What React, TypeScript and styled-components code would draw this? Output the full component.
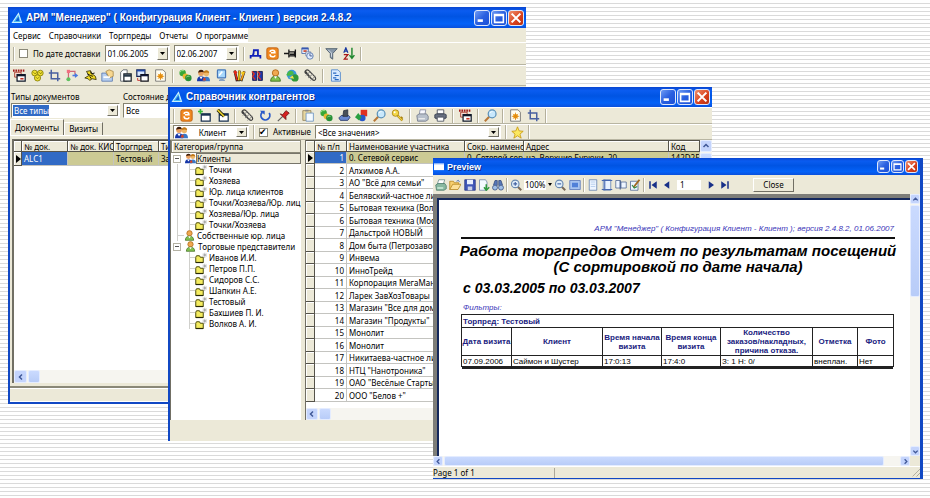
import React from "react";
import styled, { createGlobalStyle, css } from "styled-components";

const ui = '"Noto Sans", "Liberation Sans", sans-serif';
const arial = '"Liberation Sans", Arial, sans-serif';
const face = "#ece9d8";

const Global = createGlobalStyle`
  * { box-sizing: border-box; }
  body { margin: 0; font: 8px/10px ${ui}; color: #000; }
  button, input, select { font: inherit; color: inherit; margin: 0; padding: 0; border: 0; border-radius: 0; background: none; }
  svg { display: block; }
`;

const Desktop = styled.main`
  position: relative;
  height: 100vh;
  overflow: hidden;
  background: repeating-linear-gradient(#fff 0 3px, #dadada 3px 4px);
`;

const Win = styled.section`
  position: absolute;
  display: flex;
  flex-direction: column;
  overflow: hidden;
  background: ${face};
`;
const ManagerWindow = styled(Win)`
  top: 7px; left: 8px; right: 404px; bottom: 94px;
  border: solid #1148c4;
  border-width: 0 0 2px 2px;
`;
const DirectoryWindow = styled(Win)`
  top: 87px; left: 168px; right: 218px; bottom: 57px;
  border-left: 2px solid #1148c4;
`;
const PreviewWindow = styled(Win)`
  top: 158px; left: 433px; right: 7px; bottom: 19px;
  border: solid #1148c4;
  border-width: 0 3px 1px 0;
`;

const TitleBar = styled.header<{ $h: number }>`
  flex: none;
  display: flex;
  align-items: center;
  gap: 3px;
  height: ${p => p.$h}px;
  padding: 0 2px 0 1px;
  background: linear-gradient(#0a46d0, #0a5cf0 18%, #0054e3 45%, #0462f8 80%, #0a50dc);
  color: #fff;
`;
const Title = styled.h1<{ $size: number }>`
  flex: 1;
  margin: 0;
  font: bold ${p => p.$size}px/14px ${arial};
  white-space: nowrap;
  text-shadow: 1px 1px #0a2a88;
`;
const WinButtons = styled.div`display: flex; gap: 1px;`;
const WinButton = styled.button<{ $close?: boolean; $s: number }>`
  width: ${p => p.$s}px;
  height: ${p => p.$s}px;
  border: 1px solid #dfe8fb;
  border-radius: 3px;
  background: ${p => (p.$close ? "linear-gradient(135deg,#f0906c,#d8401c 60%,#b83010)" : "linear-gradient(135deg,#6f9cf4,#2a60e0 50%,#1a50d8)")};
  svg { width: 100%; height: 100%; }
`;

const MenuBar = styled.nav`
  flex: none;
  display: flex;
  gap: 8px;
  align-self: flex-start;
  height: 14px;
  padding: 2px 0 0 3px;
  background: #fff;
  font-size: 8px;
  white-space: nowrap;
`;
const MenuItem = styled.button``;

const Toolbar = styled.div<{ $h: number; $tight?: boolean }>`
  flex: none;
  display: flex;
  align-items: center;
  gap: ${p => (p.$tight ? 4 : 5)}px;
  height: ${p => p.$h}px;
  padding: 0 3px;
  border-top: 1px solid #fff;
  border-bottom: 1px solid #b8b5a2;
`;
const Group = styled.div<{ $w?: number }>`
  flex: none;
  display: flex;
  justify-content: space-between;
  width: ${p => (p.$w ? p.$w + "px" : "auto")};
`;
const Sep = styled.span`
  flex: none;
  width: 2px;
  height: 14px;
  border-left: 1px solid #b4b09c;
  border-right: 1px solid #fff;
`;
const IconButton = styled.button<{ $s: number }>`
  width: ${p => p.$s}px;
  height: ${p => p.$s}px;
  svg { width: 100%; height: 100%; }
`;

const CheckLabel = styled.label`
  display: flex;
  align-items: center;
  gap: 5px;
  white-space: nowrap;
`;
const Check = styled.input`
  appearance: none;
  width: 9px;
  height: 9px;
  border: 1px solid #8a8878;
  background: #fff;
  &:checked::after { content: "✔"; display: block; font: bold 9px/7px "DejaVu Sans", sans-serif; margin-left: -1px; }
`;

const ComboBox = styled.span<{ $w: number; $h: number }>`
  flex: none;
  display: flex;
  align-items: center;
  justify-content: space-between;
  width: ${p => p.$w}px;
  height: ${p => p.$h}px;
  padding: 1px;
  border: 1px solid;
  border-color: #85826f #fff #fff #85826f;
  background: #fff;
`;
const ComboSelect = styled.select<{ $marked?: boolean; $center?: boolean }>`
  appearance: none;
  flex: ${p => (p.$marked ? "0 0 36px" : "1")};
  min-width: 0;
  padding-left: 1px;
  line-height: 11px;
  outline: 0;
  ${p => p.$marked && css`background: #316ac5; color: #fff;`}
  ${p => p.$center && css`text-align: center;`}
`;
const ComboArrow = styled.span`
  flex: none;
  display: grid;
  place-items: center;
  width: 11px;
  height: 100%;
  border: 1px solid;
  border-color: #fff #716f64 #716f64 #fff;
  background: ${face};
`;
function Combo(p: { label: string; value: string; w: number; h: number; marked?: boolean; center?: boolean; icon?: string }) {
  return (
    <ComboBox $w={p.w} $h={p.h}>
      {p.icon && <Glyph name={p.icon} size={13} />}
      <ComboSelect aria-label={p.label} $marked={p.marked} $center={p.center}><option>{p.value}</option></ComboSelect>
      <ComboArrow><svg width="5" height="3" viewBox="0 0 5 3"><path d="M0 0h5L2.500 3z" /></svg></ComboArrow>
    </ComboBox>
  );
}

/* ---------- icons, drawn on a 16 × 16 grid ---------- */
const people = <><circle cx="5" cy="5" r="3.600" fill="#e8a060" /><path d="M1.500 4.500Q2 1 5 1t3.600 3Q5 3 1.500 4.500z" fill="#3a1a08" /><path d="M0 15q0-6 5-6t5 6z" fill="#1838a8" /><circle cx="11.500" cy="5.500" r="3.300" fill="#f0b868" /><path d="M8 5q.5-3.500 3.500-3.500T15 5q-3-1.500-7 0z" fill="#c07818" /><path d="M7 15q0-5.500 4.500-5.500T16 15z" fill="#3878c8" /><path d="M3 9.500l2 3 2-3z" fill="#fff" /><path d="M7 14q0-3 3-4l1 4z" fill="#d84020" /></>;
const person = (body: string) => <><circle cx="8" cy="4.800" r="3.900" fill="#f0a850" stroke="#a86010" /><path d="M2 15q0-6 6-6t6 6z" fill={body} stroke="#386818" /><path d="M6 9l2 3 2-3z" fill="#fff" /></>;
const lens = <><path d="M7 9l-6 6" stroke="#b87838" strokeWidth="2.500" /><circle cx="10" cy="6" r="4.800" fill="#c8e8fc" stroke="#5a90b8" strokeWidth="1.500" /><path d="M7.500 5q1-2 3-2" stroke="#fff" fill="none" /></>;
const zoomLens = <><path d="M10 10l5 5" stroke="#7a6a58" strokeWidth="2.500" /><circle cx="7" cy="6.500" r="5" fill="#e0eefa" stroke="#6888b0" strokeWidth="1.500" /></>;
const cubes = <><circle cx="4.500" cy="5" r="4" fill="#38a838" /><path d="M1 4q2-3 5-2" stroke="#b8f0a8" fill="none" /><circle cx="8" cy="9" r="3.500" fill="#e8b830" /><circle cx="11.500" cy="11" r="4" fill="#289038" /><path d="M9 10q2-2 4-1" stroke="#a8e898" fill="none" /></>;
const crop = <path d="M4 1v11h11M1 5h11v10" fill="none" stroke="#4860a0" strokeWidth="1.800" />;
const clip = <><path d="M2 3l8 10q3 2 4 0t-1-4L6 2Q4 0 2 2t1 4l6 6" fill="none" stroke="#404040" strokeWidth="1.400" /><path d="M2 8l6-5M5 11l6-5M8 14l6-5" stroke="#808080" strokeWidth="1.200" /></>;
const sunDoc = <><path d="M2 1h9l3 3v11H2z" fill="#fffdf0" stroke="#686868" /><circle cx="8" cy="9" r="3" fill="#f0a010" /><path d="M8 4.500v9M3.500 9h9M5 6l6 6M11 6l-6 6" stroke="#e08810" /></>;
const redWin = <><path d="M0 2h14" stroke="#a01818" strokeWidth="3" strokeDasharray="2 1" /><path d="M2 4h8v6H2z" fill="#f8d8d0" stroke="#a03020" /><path d="M5 7h10v8H5z" fill="#fff" stroke="#101828" strokeWidth="1.500" /><path d="M5 8h10" stroke="#101828" strokeWidth="2" /><path d="M9 12h4" stroke="#c03020" strokeWidth="2" /></>;
const orange = <><rect x="1" y="1" width="14" height="14" rx="2" fill="#f08820" stroke="#b85808" /><path d="M5 6q0-2 3-2t3 3H6M11 10q0 2-3 2t-3-3" fill="none" stroke="#fff" strokeWidth="1.800" /></>;
const winShape = <><path d="M4 6h11v9H4z" fill="#fff" stroke="#183050" strokeWidth="1.500" /><path d="M4 7h11" stroke="#183050" strokeWidth="2.500" /></>;
const pageShape = <><path d="M3 1h10v14H3z" fill="#eef5ff" stroke="#5878a8" /><path d="M5 4h6M5 7h6M5 10h6" stroke="#a8c4e8" /></>;

const icons: Record<string, React.ReactNode> = {
  logo: <><path d="M2 14L10 2l4 12z" fill="#48b8f0" stroke="#c8f0ff" strokeWidth="1.500" /><path d="M6 12l4-6 1 6z" fill="#0a58d8" /></>,
  preview: <><path d="M0 3h16v10H0z" fill="#fff" /><path d="M0 3h16" stroke="#a8c8ff" strokeWidth="2" /></>,
  orange, people, redWin, crop, clip, sunDoc, lens, cubes,
  de: <path d="M4.500 11q1.500-3 1.500-7h5v7M2 14v-3h12v3" fill="none" stroke="#1020b8" strokeWidth="2.200" />,
  pushpin: <><path d="M0 8h6M6 3v10M6 6h7v5H6zM14 3v10" fill="none" stroke="#181818" strokeWidth="1.600" /><path d="M7 9h6" stroke="#181818" strokeWidth="2" /></>,
  schedule: <><path d="M1 1h8v7H1z" fill="#e8f0ff" stroke="#4868a8" /><path d="M1 2h8" stroke="#3858b0" strokeWidth="2" /><path d="M3 5h4" stroke="#d04020" strokeWidth="2" /><path d="M6 6h6v5H6z" fill="#f8f8ff" stroke="#7080a0" /><circle cx="11" cy="11" r="4" fill="#e0ecff" stroke="#5070a8" /><path d="M11 8v3h3" fill="none" stroke="#304880" /></>,
  funnel: <><path d="M1 2h14L9.500 8v7l-3-2V8z" fill="#8898a8" stroke="#485868" /><path d="M4 3.500l4 4V12" stroke="#e0e8f0" fill="none" /></>,
  sort: <><path d="M1 7l2.500-6L6 7M2 5h3" fill="none" stroke="#1838a0" strokeWidth="1.500" /><path d="M1 9.500h5L1.500 15H6" fill="none" stroke="#a81818" strokeWidth="1.600" /><path d="M11 1v12M8 10l3 4 3-4" fill="none" stroke="#208830" strokeWidth="1.800" /></>,
  hearts: <g fill="#f0e030" stroke="#807808"><circle cx="4.500" cy="5" r="3.500" /><circle cx="11.500" cy="5" r="3.500" /><circle cx="8" cy="11" r="3.800" /><path d="M3 4l2 2 2-2M10 4l2 2 1-2M6 10l2 2 2-2" fill="none" /></g>,
  flow: <><path d="M3 3h8v4M3 3v10" fill="none" stroke="#d06878" strokeWidth="1.500" /><path d="M1 1h4v4H1z" fill="#f07080" /><path d="M11 5l4 3-4 3z" fill="#4878e0" /><path d="M8 8h4" stroke="#4878e0" strokeWidth="2" /><circle cx="3" cy="12.500" r="2.500" fill="#60c060" /></>,
  hand: <><path d="M3 3l5-1 2 4 4 3 1 4-5-1-3 2-2-2-4-1 5-3z" fill="#f0d820" stroke="#302c08" /><path d="M8 3l1 3 4-1M4 6l4 2 3 1M7 9l2 3" stroke="#181808" fill="none" strokeWidth="1.200" /></>,
  note: <><path d="M1 5h5l1 2h7v8H1z" fill="#b8d0f0" stroke="#5878b0" /><path d="M6 3l4-2 5 2v6l-5 2z" fill="#f8d890" stroke="#a88848" /><path d="M3 10h8" stroke="#fff" strokeWidth="2" /></>,
  stack: <><path d="M2 15V4l3-3h5v14z" fill="#fff" stroke="#505860" /><path d="M6 6h9v9H6z" fill="#fff" stroke="#182028" strokeWidth="1.500" /><path d="M6 8h9" stroke="#283848" strokeWidth="3" /></>,
  windows: <><path d="M1 1h10v8H1z" fill="#d8e8ff" stroke="#182858" strokeWidth="1.500" /><path d="M1 2h10" stroke="#2048a8" strokeWidth="2" /><path d="M6 7h9v8H6z" fill="#fff" stroke="#101018" strokeWidth="1.500" /><path d="M6 8h9" stroke="#101838" strokeWidth="2" /><path d="M2 11v3h3" stroke="#c02020" fill="none" /></>,
  monitor: <><rect x="3" y="1" width="10" height="10" rx="1" fill="#a8d8fc" stroke="#4878b8" strokeWidth="1.500" /><path d="M5 8l4-5" stroke="#fff" strokeWidth="2" /><path d="M5 14q3-3 7 0z" fill="#7898c0" stroke="#7898c0" /></>,
  pencils: <><path d="M2 2l3 13M8 2L7 15M14 3l-4 12" stroke="#181818" strokeWidth="3" /><path d="M2 2l3 12" stroke="#e02818" strokeWidth="2" /><path d="M8 2L7 14" stroke="#f0c818" strokeWidth="2" /><path d="M14 3l-4 11" stroke="#f8a018" strokeWidth="2" /><circle cx="3" cy="4" r="2" fill="#e02818" /><circle cx="12" cy="5" r="2" fill="#f0c818" /></>,
  books: <><path d="M2 3h5v11H2zM9 3h5v11H9z" fill="#2038b0" stroke="#101040" /><path d="M1 3l3 3-2 3 3 4M8 3l3 3-2 3 3 4" stroke="#e03020" fill="none" strokeWidth="1.600" /></>,
  person: person("#80c050"),
  globe: <><circle cx="7" cy="7" r="6" fill="#3898d8" /><path d="M3 3q4-2 6 1T5 8 1 6z" fill="#48b848" /><circle cx="11" cy="11" r="4.500" fill="#309838" /><path d="M4 11l4-3 2 4z" fill="#f0e050" /></>,
  list: <><path d="M3 1h8l3 3v11H3z" fill="#d8eaff" stroke="#4880c8" /><path d="M5 5h4M7 8h5M5 11h4M7 13h5" stroke="#2868c0" strokeWidth="1.500" /></>,
  addWin: <>{winShape}<path d="M3 0v6M0 3h6" stroke="#38b838" strokeWidth="2" /></>,
  editWin: <>{winShape}<path d="M2 1l8 8" stroke="#181808" strokeWidth="4" /><path d="M2 1l8 8" stroke="#e8d030" strokeWidth="2" /></>,
  refresh: <><path d="M4 4a5.500 5.500 0 1 0 8.500 1" fill="none" stroke="#2858c8" strokeWidth="2.200" /><path d="M1 2h6v5z" fill="#2858c8" /></>,
  redPin: <><path d="M1 15l6-6" stroke="#606060" strokeWidth="1.500" /><path d="M4 6l3 1 4-5 4 3-4 4v4z" fill="#d82020" stroke="#681010" /></>,
  paste: <><path d="M1 2h10v12H1z" fill="#e8d8a0" stroke="#908058" /><path d="M4 1h4v2H4z" fill="#888" /><path d="M5 5h9v10H5z" fill="#f4faff" stroke="#6890c0" /></>,
  stamp: <><path d="M1 11l3-3h9l2 2-3 4H3z" fill="#6888d0" stroke="#283868" /><path d="M6 9l1-7 5-1v8z" fill="#485058" stroke="#283040" /></>,
  shapes: <><path d="M7 1h8v8H7z" fill="#e03020" /><circle cx="9" cy="11" r="4" fill="#2858c8" /><path d="M0 10l4-5 4 5-3 4z" fill="#28a040" /></>,
  key: <><path d="M8 8l6 6M12 12l2-2" stroke="#a88010" strokeWidth="3" /><path d="M8 8l6 6" stroke="#f0d040" strokeWidth="1.500" /><circle cx="5.500" cy="5" r="4" fill="#f4d848" stroke="#a88010" /><circle cx="4.500" cy="4" r="1.200" fill="#fff" /></>,
  printer: <><path d="M5 1h7l-1 6H4z" fill="#f8f8ff" stroke="#8088a0" /><path d="M1 8l3-2h9l2 3v4l-3 2H2z" fill="#b8c0cc" stroke="#707888" /><path d="M3 12h8" stroke="#f0f0f0" strokeWidth="1.500" /></>,
  darkPrinter: <><path d="M4 1h8v5H4z" fill="#fff" stroke="#404858" /><path d="M1 7l2-1h10l2 1v4l-2 1H3l-2-1z" fill="#687080" stroke="#303848" /><path d="M4 10h8v5H4z" fill="#fff" stroke="#404858" /></>,
  star: <path d="M8 1l2 5 5 .5-4 3.500 1.500 5L8 12l-4.500 3L5 10 1 6.500 6 6z" fill="#fbe860" stroke="#c8980c" />,
  greenPrinter: <><path d="M5 1h8l-2 6H3z" fill="#fff" stroke="#688" /><path d="M1 8l3-2h9l2 3v4l-3 2H2z" fill="#88b8a0" stroke="#487868" /><path d="M3 12h8" stroke="#e8fff0" strokeWidth="1.500" /></>,
  open: <><path d="M1 14V3h5l1 2h6v3" fill="#f8d070" stroke="#b08018" /><path d="M1 14l4-7h11l-4 7z" fill="#fce098" stroke="#b08018" /><path d="M10 3q3-3 4 1" fill="none" stroke="#2858b0" /></>,
  save: <><path d="M1 1h14v14H1z" fill="#4058b8" stroke="#203080" /><path d="M4 1h8v6H4z" fill="#e8f0ff" /><path d="M5 10h6v5H5z" fill="#c8d0e8" /></>,
  export: <><path d="M2 1h8l2 3v11H2z" fill="#f4faff" stroke="#6880a8" /><path d="M11 7v7M8 11l3 4 4-4" stroke="#309840" fill="none" strokeWidth="2" /></>,
  find: <><path d="M2 8l2-6h3v7M14 8l-2-6H9v7" fill="#5878b8" stroke="#304878" /><circle cx="4" cy="11.500" r="3.300" fill="#a0c0e8" stroke="#304878" /><circle cx="12" cy="11.500" r="3.300" fill="#a0c0e8" stroke="#304878" /></>,
  zoomIn: <>{zoomLens}<path d="M4.500 6.500h5M7 4v5" stroke="#4060a0" strokeWidth="1.500" /></>,
  zoomOut: <>{zoomLens}<path d="M4.500 6.500h5" stroke="#4060a0" strokeWidth="1.500" /></>,
  full: <><path d="M1 2h14v12H1z" fill="#a8c4f0" stroke="#5070b8" /><path d="M4 5h8v6H4z" fill="#5080d8" /></>,
  page: pageShape,
  margins: <><path d="M3 1h10v14H3z" fill="#e8f2ff" stroke="#5878a8" /><path d="M1 2h14M1 14h14M5 1v14" stroke="#4868b0" strokeWidth="1.500" /></>,
  book: <><path d="M1 2h6v10H1zM8 4h7v8H8z" fill="#eef5ff" stroke="#486090" /><path d="M7 2v12" stroke="#486090" strokeWidth="1.500" /></>,
  edit: <><path d="M2 3h10v12H2z" fill="#eef5ff" stroke="#486090" /><path d="M14 1L6 11" stroke="#a06820" strokeWidth="2.500" /><path d="M4 8l3 4 4-2" stroke="#308840" fill="none" strokeWidth="1.500" /></>,
  first: <path d="M3 3h2v10H3zM13 3v10L6 8z" fill="#183088" />,
  prev: <path d="M11 3v10L4 8z" fill="#183088" />,
  next: <path d="M5 3v10l7-5z" fill="#183088" />,
  last: <path d="M3 3v10l7-5zM11 3h2v10h-2z" fill="#183088" />,
  folder: <><path d="M1 14V7l1-2h4l1 2h4v7z" fill="#f4ec60" stroke="#484808" strokeWidth="1.300" /><path d="M1 14h10" stroke="#282808" strokeWidth="1.600" /><path d="M13 1v7M10 4h6M11 2l4 4M15 2l-4 4" stroke="#999" strokeWidth=".8" /></>,
  left: <path d="M10 3L5 8l5 5" fill="none" stroke="#405898" strokeWidth="3" />,
  right: <path d="M6 3l5 5-5 5" fill="none" stroke="#405898" strokeWidth="3" />,
  up: <path d="M3 10l5-5 5 5" fill="none" stroke="#405898" strokeWidth="3" />,
  down: <path d="M3 6l5 5 5-5" fill="none" stroke="#405898" strokeWidth="3" />,
  min: <path d="M3 11h6" stroke="#fff" strokeWidth="3" />,
  max: <path d="M3 4h10v9H3zM3 5h10" fill="none" stroke="#fff" strokeWidth="1.800" />,
  close: <path d="M3 3l10 10M13 3L3 13" stroke="#fff" strokeWidth="2.400" />,
};
function Glyph({ name, size }: { name: string; size: number }) {
  return <svg width={size} height={size} viewBox="0 0 16 16" aria-hidden="true">{icons[name]}</svg>;
}
function Icons({ names, w, size = 13 }: { names: string[]; w?: number; size?: number }) {
  return <Group $w={w}>{names.map((n, i) => <IconButton key={i} $s={size} aria-label={n}><Glyph name={n} size={size} /></IconButton>)}</Group>;
}
function Bar({ h, icon, title, size, button }: { h: number; icon: string; title: string; size: number; button: number }) {
  return (
    <TitleBar $h={h}>
      <Glyph name={icon} size={icon === "logo" ? 12 : 10} />
      <Title $size={size}>{title}</Title>
      <WinButtons>
        {["min", "max", "close"].map(n => <WinButton key={n} aria-label={n} $s={button} $close={n === "close"}><Glyph name={n} size={13} /></WinButton>)}
      </WinButtons>
    </TitleBar>
  );
}

/* ---------- scroll bars ---------- */
const ScrollTrack = styled.div<{ $vertical?: boolean; $t: number }>`
  flex: none;
  display: flex;
  flex-direction: ${p => (p.$vertical ? "column" : "row")};
  gap: 1px;
  ${p => (p.$vertical ? "width" : "height")}: ${p => p.$t}px;
  background: #f6f5f0;
`;
const ScrollButton = styled.button<{ $t: number }>`
  flex: none;
  display: grid;
  place-items: center;
  width: ${p => p.$t}px;
  height: ${p => p.$t}px;
  border: 1px solid #e4ecff;
  border-radius: 2px;
  background: #c4d4fc;
`;
const Thumb = styled.span<{ $grow: string }>`
  flex: ${p => p.$grow};
  border: 1px solid #e4ecff;
  border-radius: 2px;
  background: linear-gradient(#cadafe, #b8ccf8);
`;
const ScrollGap = styled.span<{ $grow: string }>`flex: ${p => p.$grow};`;

/* ---------- manager window ---------- */
const Filters = styled.div`
  flex: none;
  display: grid;
  grid-template-columns: 109px 1fr;
  gap: 1px 3px;
  padding: 6px 0 0 1px;
  white-space: nowrap;
`;
const FilterLabel = styled.span`height: 10px;`;
const Tabs = styled.div`
  flex: none;
  display: flex;
  align-items: flex-end;
  height: 18px;
  border-bottom: 1px solid #fff;
`;
const Tab = styled.button<{ $active?: boolean }>`
  height: ${p => (p.$active ? 16 : 13)}px;
  padding: 0 4px;
  border: solid #fff;
  border-width: 1px 0 0 1px;
  border-right: 1px solid #716f64;
`;
const Sheet = styled.div`
  flex: 1;
  display: flex;
  flex-direction: column;
  min-height: 0;
  margin: 3px 0 0 2px;
  border: solid #716f64;
  border-width: 1px 0 0 2px;
  background: #fff;
  overflow: hidden;
`;
const SheetFill = styled.div`flex: 1; min-height: 0;`;
const StatusStrip = styled.footer<{ $h: number }>`
  flex: none;
  height: ${p => p.$h}px;
  margin-top: 3px;
  border-top: 2px solid #8a8878;
  box-shadow: inset 0 1px #fff, inset 0 -1px #fff;
`;

const Grid = styled.table`
  flex: none;
  width: 100%;
  table-layout: fixed;
  border-collapse: separate;
  border-spacing: 0;
  white-space: nowrap;
  th, td { padding: 0 2px; overflow: hidden; }
`;
const Head = styled.th<{ $w?: number }>`
  width: ${p => (p.$w ? p.$w + "px" : "auto")};
  height: 12px;
  border: solid #55534a;
  border-width: 1px 1px 1px 0;
  background: ${face};
  box-shadow: inset 1px 1px #fff;
  font-weight: normal;
  line-height: 9px;
  text-align: left;
`;
const Marker = styled.td`
  border: solid #55534a;
  border-width: 0 1px 1px 0;
  background: ${face};
  box-shadow: inset 1px 1px #fff;
`;
const Row = styled.tr<{ $current?: boolean; $h: number }>`
  height: ${p => p.$h}px;
  background: ${p => (p.$current ? "#ccca94" : "#fff")};
`;
const Cell = styled.td<{ $picked?: boolean; $right?: boolean }>`
  border: solid #c4c4c0;
  border-width: 0 1px 1px 0;
  line-height: 9px;
  text-align: ${p => (p.$right ? "right" : "left")};
  ${p => p.$picked && css`background: #316ac5; color: #fff;`}
`;
const Pointer = () => <svg width="5" height="8" viewBox="0 0 5 8"><path d="M0 0l5 4-5 4z" /></svg>;

/* ---------- directory window ---------- */
const Split = styled.div`
  flex: 1;
  display: flex;
  gap: 4px;
  min-height: 0;
`;
const TreePane = styled.div`
  flex: none;
  display: flex;
  flex-direction: column;
  width: 131px;
  border-left: 1px solid #716f64;
  background: #fff;
`;
const TreeHead = styled.div`
  height: 13px;
  padding: 1px 2px;
  border: 1px solid #8a8878;
  background: ${face};
  box-shadow: inset 1px 1px #fff;
  line-height: 9px;
`;
const Tree = styled.ul`
  list-style: none;
  margin: 0;
  padding: 0 0 0 2px;
`;
const Node = styled.li`
  display: flex;
  align-items: center;
  height: 11px;
  white-space: nowrap;
`;
const Expander = styled.button`
  display: grid;
  place-items: center;
  width: 8px;
  height: 8px;
  margin-right: 4px;
  border: 1px solid #b4b2a4;
`;
const Elbow = styled.span<{ $at: number; $w: number }>`
  flex: none;
  width: ${p => p.$w}px;
  height: 11px;
  margin-left: ${p => p.$at}px;
  border-left: 1px solid #d0d0cc;
  background: linear-gradient(#d0d0cc, #d0d0cc) 0 5px / 100% 1px no-repeat;
`;
const NodeText = styled.span<{ $focus?: boolean }>`
  ${p => p.$focus
    ? css`flex: 1; height: 11px; border: 1px solid #77756a; background: ${face}; line-height: 9px;`
    : css`padding-left: 2px;`}
`;
const DataPane = styled.div`
  flex: 1;
  display: flex;
  min-width: 0;
  border-left: 1px solid #716f64;
  background: #fff;
`;
const DataColumn = styled.div`
  flex: 1;
  display: flex;
  flex-direction: column;
  min-width: 0;
`;
const DirectoryStatus = styled.footer`flex: none; height: 21px;`;

/* ---------- preview window ---------- */
const PreviewTools = styled.div`
  flex: none;
  display: flex;
  align-items: center;
  gap: 2px;
  height: 19px;
  padding-left: 2px;
`;
const Zoom = styled.select`appearance: none; width: 22px; height: 10px; background: #fff; padding-left: 1px;`;
const PageInput = styled.input`width: 24px; height: 10px; margin: 0 2px; padding-left: 3px; background: #fff;`;
const CloseButton = styled.button`
  width: 41px;
  height: 14px;
  margin-left: 20px;
  border: 1px solid;
  border-color: #fff #716f64 #716f64 #fff;
  background: ${face};
`;
const Viewer = styled.div`
  flex: 1;
  display: flex;
  min-height: 0;
`;
const Canvas = styled.div`
  flex: 1;
  display: flex;
  min-width: 0;
  padding: 4px 0 0 4px;
  background: #7d7d78;
`;
const Paper = styled.article`
  flex: 1;
  min-width: 0;
  padding: 24px 15px 0 22px;
  border: solid #14285c;
  border-width: 2px 0 0 2px;
  background: #fff;
  font-family: ${arial};
`;
const ReportSource = styled.p`
  margin: 0;
  padding: 0 1px 3px;
  border-bottom: 2px solid #111;
  color: #3a34b8;
  font: italic 8px/10px ${arial};
  text-align: right;
`;
const ReportTitle = styled.h2`
  display: flex;
  flex-direction: column;
  align-items: center;
  margin: 4px 0 0;
  font: italic bold 15px/16px ${arial};
  white-space: nowrap;
`;
const Period = styled.p`margin: 5px 0 0 2px; font: italic bold 14px/16px ${arial};`;
const FilterNote = styled.p`margin: 7px 0 1px 2px; color: #3a34b8; font: italic 8px/10px ${arial};`;
const Report = styled.table`
  width: calc(100% - 2px);
  table-layout: fixed;
  border-collapse: collapse;
  box-shadow: 0 3px 0 -1px #222;
  font: 8px/9px ${arial};
  th, td { padding: 0; border: 1px solid #222; white-space: nowrap; }
  th { color: #201c80; }
  td { height: 11px; padding-left: 1px; }
`;
const GroupHead = styled.th`&& { height: 13px; padding-left: 1px; text-align: left; }`;
const ColumnHead = styled.th`height: 27px;`;
const PreviewStatus = styled.footer`
  flex: none;
  display: flex;
  align-items: center;
  height: 12px;
  border-top: 1px solid #fff;
`;
const StatusCell = styled.span`width: 122px; border-right: 1px solid #aca899;`;
const Grip = styled.span`
  width: 8px; height: 8px; margin-left: auto;
  background: repeating-linear-gradient(135deg, ${face} 0 2px, #aca899 2px 3px);
  clip-path: polygon(100% 0, 100% 100%, 0 100%);
`;
const Col = styled.col<{ $w: number }>`width: ${p => p.$w}px;`;
const HorizontalBar = styled.div`flex: none; padding-right: 10px;`;

const clients = ["Точки", "Хозяева", "Юр. лица клиентов", "Точки/Хозяева/Юр. лиц", "Хозяева/Юр. лица", "Точки/Хозяева"];
const agents = ["Иванов И.И.", "Петров П.П.", "Сидоров С.С.", "Шапкин А.Е.", "Тестовый", "Бахшиев П. И.", "Волков А. И."];
const members = ["0. Сетевой сервис", "Алхимов А.А.", 'АО "Всё для семьи"', "Белявский-частное ли", "Бытовая техника (Вол", "Бытовая техника (Мос", "Дальстрой НОВЫЙ", "Дом быта (Петрозаво", "Инвема", "ИнноТрейд", "Корпорация МегаМан", "Ларек ЗавХозТовары", 'Магазин "Все для дом', 'Магазин "Продукты"', "Монолит", "Монолит", "Никитаева-частное ли", 'НТЦ "Нанотроника"', 'ОАО "Весёлые Старты', 'ООО "Белов +"'];

function Folder({ text, trunk }: { text: string; trunk?: boolean }) {
  return <Node>{trunk ? <><Elbow $at={4} $w={1} /><Elbow $at={11} $w={6} /></> : <Elbow $at={16} $w={6} />}<Glyph name="folder" size={12} /><NodeText>{text}</NodeText></Node>;
}
const Minus = () => <svg width="4" height="1"><path d="M0 0h4v1H0z" fill="#555" /></svg>;

function Manager() {
  return (
    <ManagerWindow>
      <Bar h={21} icon="logo" size={10} button={16} title={'АРМ "Менеджер" ( Конфигурация Клиент - Клиент ) версия 2.4.8.2'} />
      <MenuBar>{["Сервис", "Справочники", "Торгпреды", "Отчеты", "О программе"].map(m => <MenuItem key={m}>{m}</MenuItem>)}</MenuBar>
      <Toolbar $h={23} $tight>
        <Sep />
        <CheckLabel><Check type="checkbox" />По дате доставки</CheckLabel>
        <Combo label="С даты" value="01.06.2005" w={65} h={17} />
        <Combo label="По дату" value="02.06.2007" w={65} h={17} />
        <Sep />
        <Icons names={["de", "orange", "pushpin", "schedule"]} w={66} />
        <Sep />
        <Icons names={["funnel", "sort"]} w={31} />
        <Sep />
      </Toolbar>
      <Toolbar $h={21}>
        <Icons names={["redWin", "hearts", "crop", "flow", "hand", "note", "stack", "windows", "sunDoc"]} w={154} />
        <Sep />
        <Icons names={["cubes", "people", "monitor"]} w={49} />
        <Icons names={["pencils", "books", "person", "globe", "clip"]} w={84} />
        <Sep />
        <Icons names={["list"]} />
      </Toolbar>
      <Filters>
        <FilterLabel>Типы документов</FilterLabel>
        <FilterLabel>Состояние д</FilterLabel>
        <Combo label="Типы документов" value="Все типы" w={109} h={15} marked />
        <Combo label="Состояние" value="Все" w={120} h={15} />
      </Filters>
      <Tabs role="tablist">
        <Tab role="tab" $active>Документы</Tab>
        <Tab role="tab">Визиты</Tab>
      </Tabs>
      <Sheet>
        <Grid>
          <thead><tr><Head $w={8} /><Head $w={46}>№ док.</Head><Head $w={46}>№ док. КИС</Head><Head $w={45}>Торгпред</Head><Head>Ти</Head></tr></thead>
          <tbody><Row $h={14} $current><Marker><Pointer /></Marker><Cell $picked>ALC1</Cell><Cell /><Cell>Тестовый</Cell><Cell>За</Cell></Row></tbody>
        </Grid>
        <SheetFill />
        <ScrollTrack $t={13}><ScrollButton $t={13} aria-label="Влево"><Glyph name="left" size={8} /></ScrollButton><Thumb $grow="0 0 12px" /></ScrollTrack>
      </Sheet>
      <StatusStrip $h={16} />
    </ManagerWindow>
  );
}

function Directory() {
  return (
    <DirectoryWindow>
      <Bar h={20} icon="logo" size={10} button={16} title="Справочник контрагентов" />
      <Toolbar $h={17}>
        <Sep />
        <Icons names={["orange", "addWin", "editWin"]} w={49} />
        <Sep />
        <Icons names={["clip", "refresh", "redPin"]} w={49} />
        <Sep />
        <Icons names={["paste", "cubes", "stamp", "shapes", "lens", "key"]} w={102} />
        <Sep />
        <Icons names={["printer", "darkPrinter"]} w={31} />
        <Sep />
        <Icons names={["redWin"]} />
        <Sep />
        <Icons names={["lens"]} />
        <Sep />
        <Icons names={["sunDoc", "crop"]} w={31} />
        <Sep />
      </Toolbar>
      <Toolbar $h={16} $tight>
        <Combo label="Тип" value="Клиент" w={76} h={14} icon="people" center />
        <Sep />
        <CheckLabel><Check type="checkbox" defaultChecked />Активные</CheckLabel>
        <Combo label="Значения" value="<Все значения>" w={186} h={14} />
        <Sep />
        <Icons names={["star"]} />
        <Sep />
      </Toolbar>
      <Split>
        <TreePane>
          <TreeHead>Категория/группа</TreeHead>
          <Tree>
            <Node><Expander aria-label="Свернуть"><Minus /></Expander><Glyph name="people" size={11} /><NodeText $focus>Клиенты</NodeText></Node>
            {clients.map(t => <Folder key={t} text={t} trunk />)}
            <Node><Elbow $at={4} $w={7} /><Glyph name="person" size={11} /><NodeText>Собственные юр. лица</NodeText></Node>
            <Node><Expander aria-label="Свернуть"><Minus /></Expander><Glyph name="person" size={11} /><NodeText>Торговые представители</NodeText></Node>
            {agents.map(t => <Folder key={t} text={t} />)}
          </Tree>
        </TreePane>
        <DataPane>
          <DataColumn>
            <Grid>
              <thead><tr><Head $w={9} /><Head $w={32}>№ п/п</Head><Head $w={118}>Наименование участника</Head><Head $w={59}>Сокр. наимено</Head><Head $w={145}>Адрес</Head><Head>Код</Head></tr></thead>
              <tbody>
                {members.map((m, i) => (
                  <Row key={i} $h={i % 2 ? 13 : 12} $current={i === 0}>
                    <Marker>{i === 0 && <Pointer />}</Marker>
                    <Cell $right $picked={i === 0}>{i + 1}</Cell>
                    <Cell>{m}</Cell>
                    <Cell>{i === 0 && "0. Сетевой серы"}</Cell>
                    <Cell>{i === 0 && "ца, Верхние Бурюки, 20"}</Cell>
                    <Cell>{i === 0 && "142D2F"}</Cell>
                  </Row>
                ))}
              </tbody>
            </Grid>
            <SheetFill />
            <ScrollTrack $t={12}><ScrollButton $t={12} aria-label="Влево"><Glyph name="left" size={8} /></ScrollButton><Thumb $grow="0 0 12px" /></ScrollTrack>
          </DataColumn>
          <ScrollTrack $vertical $t={12}><ScrollButton $t={12} aria-label="Вверх"><Glyph name="up" size={8} /></ScrollButton><Thumb $grow="0 0 60px" /></ScrollTrack>
        </DataPane>
      </Split>
      <DirectoryStatus />
    </DirectoryWindow>
  );
}

function Preview() {
  return (
    <PreviewWindow>
      <Bar h={17} icon="preview" size={9} button={13} title="Preview" />
      <PreviewTools>
        <Icons names={["greenPrinter", "open", "save", "export", "find"]} w={69} size={12} />
        <Sep />
        <Icons names={["zoomIn"]} size={12} />
        <Zoom aria-label="Масштаб"><option>100%</option></Zoom>
        <svg width="4" height="3" viewBox="0 0 4 3"><path d="M0 0h4L2 3z" /></svg>
        <Icons names={["zoomOut", "full"]} w={27} size={12} />
        <Sep />
        <Icons names={["page", "margins", "book", "edit"]} w={54} size={12} />
        <Sep />
        <Icons names={["first", "prev"]} w={26} size={12} />
        <PageInput aria-label="Страница" defaultValue="1" />
        <Icons names={["next", "last"]} w={26} size={12} />
        <CloseButton>Close</CloseButton>
      </PreviewTools>
      <Viewer>
        <Canvas>
          <Paper>
            <ReportSource>АРМ "Менеджер" ( Конфигурация Клиент - Клиент ); версия 2.4.8.2, 01.06.2007</ReportSource>
            <ReportTitle><span>Работа торгпредов Отчет по результатам посещений</span><span>(С сортировкой по дате начала)</span></ReportTitle>
            <Period>с 03.03.2005 по 03.03.2007</Period>
            <FilterNote>Фильтры:</FilterNote>
            <Report>
              <colgroup><Col $w={50} /><Col $w={91} /><Col $w={59} /><Col $w={59} /><Col $w={92} /><Col $w={45} /><Col $w={36} /></colgroup>
              <thead>
                <tr><GroupHead colSpan={7}>Торпред: Тестовый</GroupHead></tr>
                <tr>
                  <ColumnHead>Дата визита</ColumnHead><ColumnHead>Клиент</ColumnHead>
                  <ColumnHead>Время начала<br />визита</ColumnHead><ColumnHead>Время конца<br />визита</ColumnHead>
                  <ColumnHead>Количество<br />заказов/накладных,<br />причина отказа.</ColumnHead>
                  <ColumnHead>Отметка</ColumnHead><ColumnHead>Фото</ColumnHead>
                </tr>
              </thead>
              <tbody><tr><td>07.09.2006</td><td>Саймон и Шустер</td><td>17:0:13</td><td>17:4:0</td><td>З: 1 Н: 0/</td><td>внеплан.</td><td>Нет</td></tr></tbody>
            </Report>
          </Paper>
        </Canvas>
        <ScrollTrack $vertical $t={10}>
          <ScrollButton $t={10} aria-label="Вверх"><Glyph name="up" size={7} /></ScrollButton>
          <Thumb $grow="37" /><ScrollGap $grow="60" />
          <ScrollButton $t={10} aria-label="Вниз"><Glyph name="down" size={7} /></ScrollButton>
        </ScrollTrack>
      </Viewer>
      <HorizontalBar>
        <ScrollTrack $t={10}>
          <ScrollButton $t={10} aria-label="Влево"><Glyph name="left" size={7} /></ScrollButton>
          <Thumb $grow="443" /><ScrollGap $grow="14" />
          <ScrollButton $t={10} aria-label="Вправо"><Glyph name="right" size={7} /></ScrollButton>
        </ScrollTrack>
      </HorizontalBar>
      <PreviewStatus><StatusCell>Page 1 of 1</StatusCell><Grip /></PreviewStatus>
    </PreviewWindow>
  );
}

export default function App() {
  return (
    <>
      <Global />
      <Desktop>
        <Manager />
        <Directory />
        <Preview />
      </Desktop>
    </>
  );
}
